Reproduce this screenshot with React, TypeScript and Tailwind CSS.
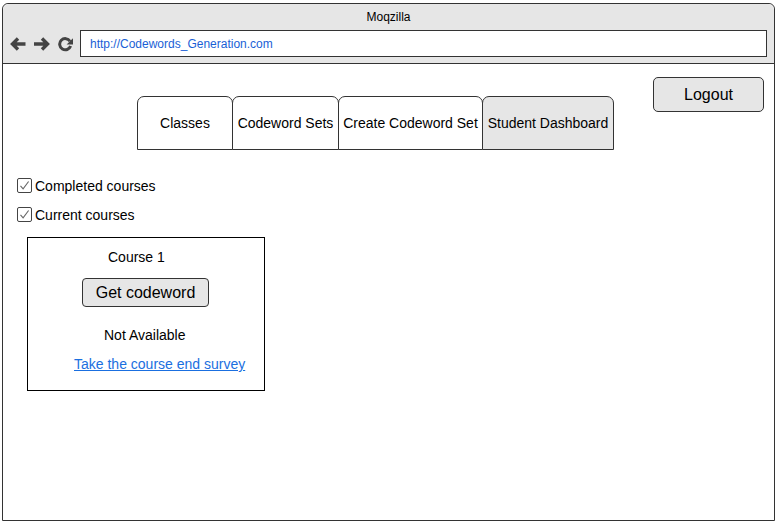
import React from "react";

const TABS = [
  { label: "Classes", w: "w-[96px]" },
  { label: "Codeword Sets", w: "w-[107px]" },
  { label: "Create Codeword Set", w: "w-[145px]" },
  { label: "Student Dashboard", w: "w-[132px]", active: true },
];

function NavIcons() {
  return (
    <div className="flex items-center gap-[7px] pl-[7px] text-[#444]">
      {/* back */}
      <svg width="16" height="16" viewBox="0 0 16 16" aria-hidden>
        <path d="M15.5 8H3M8 2.5L2.5 8 8 13.5" fill="none" stroke="currentColor" strokeWidth="3.4" />
      </svg>
      {/* forward */}
      <svg width="17" height="16" viewBox="0 0 17 16" aria-hidden>
        <path d="M1 8h13M9 2.5L14.5 8 9 13.5" fill="none" stroke="currentColor" strokeWidth="3.4" />
      </svg>
      {/* reload */}
      <svg width="17" height="16" viewBox="0 0 17 16" aria-hidden>
        <path d="M13 5.2A5.6 5.6 0 1 0 13.6 10" fill="none" stroke="currentColor" strokeWidth="3" />
        <path d="M16 2.2v6.4H9.6z" fill="currentColor" />
      </svg>
    </div>
  );
}

function Checkbox({ label }: { label: string }) {
  return (
    <div className="flex items-center gap-[3px] h-[15px]">
      <span className="flex h-[15px] w-[15px] items-center justify-center rounded-[2px] border border-[#444] bg-white">
        <svg width="11" height="11" viewBox="0 0 11 11" aria-hidden>
          <path d="M1.5 5.8l2.6 3L9.6 1.5" fill="none" stroke="#666" strokeWidth="1.1" />
        </svg>
      </span>
      <span className="text-[14px] leading-none text-black">{label}</span>
    </div>
  );
}

export default function App() {
  return (
    <div
      className="w-[778px] h-[525px] bg-white pt-[3px] pl-[2px]"
      style={{ fontFamily: '"Liberation Sans", Arial, sans-serif' }}
    >
      <div className="flex h-[518px] w-[773px] flex-col rounded-t-[6px] border border-[#333] bg-white">
        {/* browser chrome */}
        <div className="h-[60px] shrink-0 rounded-t-[6px] border-b border-[#333] bg-[#e6e6e6]">
          <div className="pt-[6px] text-center text-[12px] leading-[14px] text-black">Moqzilla</div>
          <div className="mt-[6px] flex items-center">
            <NavIcons />
            <div className="ml-[6px] flex h-[27px] w-[687px] items-center border border-[#333] bg-white pl-[9px] text-[12px] text-[#1a5fd6]">
              http://Codewords_Generation.com
            </div>
          </div>
        </div>

        {/* page */}
        <div className="flex-1">
          <div className="flex items-start">
            <div className="ml-[134px] mt-[32px] flex">
              {TABS.map((t, i) => (
                <div
                  key={t.label}
                  className={`${t.w} flex h-[54px] items-center justify-center whitespace-nowrap rounded-t-[7px] border border-[#333] text-[14px] text-black ${
                    i > 0 ? "-ml-px" : ""
                  } ${t.active ? "bg-[#e6e6e6]" : "bg-white"}`}
                >
                  {t.label}
                </div>
              ))}
            </div>
            <button className="ml-auto mr-[10px] mt-[13px] flex h-[35px] w-[111px] items-center justify-center rounded-[5px] border border-[#333] bg-[#e6e6e6] text-[16px] text-black">
              Logout
            </button>
          </div>

          <div className="ml-[14px] mt-[28px] flex flex-col gap-[14px]">
            <Checkbox label="Completed courses" />
            <Checkbox label="Current courses" />
          </div>

          <div className="ml-[24px] mt-[15px] h-[154px] w-[238px] border border-black">
            <div className="ml-[80px] mt-[11px] text-[14px] leading-[16px] text-black">Course 1</div>
            <button className="ml-[54px] mt-[13px] flex h-[29px] w-[127px] items-center justify-center rounded-[4px] border border-[#333] bg-[#e6e6e6] text-[16px] text-black">
              Get codeword
            </button>
            <div className="ml-[76px] mt-[20px] text-[14px] leading-[16px] text-black">Not Available</div>
            <a
              href="#"
              className="ml-[46px] mt-[13px] block text-[14px] leading-[16px] text-[#1a6fe0] underline"
            >
              Take the course end survey
            </a>
          </div>
        </div>
      </div>
    </div>
  );
}
